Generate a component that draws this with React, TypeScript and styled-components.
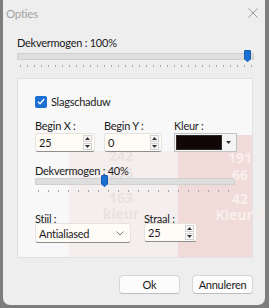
import React from 'react';
import styled, { createGlobalStyle } from 'styled-components';

const GlobalStyle = createGlobalStyle`
  html, body {
    margin: 0;
    padding: 0;
    background: #7d7d7d;
  }
  body {
    font-family: 'Lato', 'Noto Sans', sans-serif;
    font-size: 11px;
    letter-spacing: -0.25px;
    color: #1b1b1b;
  }
`;

const Screen = styled.div`
  width: 269px;
  height: 308px;
  padding-left: 3px;
  box-sizing: border-box;
  overflow: hidden;
  background: #7d7d7d;
`;

const Dialog = styled.div`
  width: 262px;
  height: 305px;
  background: #eeeeee;
  border-radius: 0 0 7px 7px;
  display: flex;
  flex-direction: column;
  overflow: hidden;
`;

const TitleBar = styled.div`
  height: 26px;
  display: flex;
  align-items: center;
  justify-content: space-between;
  padding: 0 7px 0 3px;
  color: #a3a3a3;
  font-size: 11.5px;
`;

const Body = styled.div`
  padding: 10px 12px 0 14px;
  display: flex;
  flex-direction: column;
`;

const Label = styled.div<{ $h?: number }>`
  line-height: 14px;
  height: ${(p) => p.$h ?? 14}px;
  white-space: nowrap;
`;

const SliderWrap = styled.div<{ $w: number }>`
  width: ${(p) => p.$w}px;
  display: flex;
  flex-direction: column;
`;

const TrackRow = styled.div`
  position: relative;
  height: 12px;
  display: flex;
  align-items: center;
`;

const Track = styled.div`
  flex: 1;
  height: 5px;
  background: #dedede;
  border: 1px solid #d0d0d0;
  border-radius: 1px;
`;

const Thumb = styled.div`
  position: absolute;
  top: 0;
  width: 7px;
  height: 12px;
  background: #1b6fd2;
  border: 1px solid #155bb0;
  box-sizing: border-box;
  border-radius: 1px 1px 3px 3px;
  clip-path: polygon(0 0, 100% 0, 100% 75%, 50% 100%, 0 75%);
`;

const Ticks = styled.div<{ $gap: number }>`
  height: 2px;
  margin-top: 3px;
  margin-left: 3px;
  background-image: repeating-linear-gradient(
    to right,
    #a7a7a7 0 1px,
    transparent 1px ${(p) => p.$gap}px
  );
`;

const Panel = styled.div`
  position: relative;
  margin-top: 11px;
  width: 236px;
  height: 180px;
  box-sizing: border-box;
  border: 1px solid #e1e1e1;
  background-color: #f8f8f8;
  background-image: linear-gradient(#f1dbd8, #f1dbd8),
    linear-gradient(#f4efee, #f4efee);
  background-repeat: no-repeat;
  background-size: 76px 124px, 112px 108px;
  background-position: 160px 56px, 51px 72px;
  padding: 16px 0 0 17px;
  display: flex;
  flex-direction: column;
`;

const Ghost = styled.div<{ $x: number; $y: number; $color: string }>`
  position: absolute;
  left: ${(p) => p.$x}px;
  top: ${(p) => p.$y}px;
  width: 60px;
  display: flex;
  flex-direction: column;
  align-items: center;
  font-family: 'Noto Sans', sans-serif;
  font-weight: 700;
  font-size: 14px;
  letter-spacing: 0;
  line-height: 17px;
  color: ${(p) => p.$color};
  z-index: 0;
`;

const GhostLine = styled.span<{ $mt?: number }>`
  margin-top: ${(p) => p.$mt ?? 0}px;
  white-space: nowrap;
`;

const Content = styled.div`
  position: relative;
  z-index: 1;
  display: flex;
  flex-direction: column;
`;

const CheckRow = styled.label`
  display: flex;
  align-items: center;
  gap: 4px;
  height: 13px;
`;

const Check = styled.span`
  width: 12px;
  height: 12px;
  border-radius: 2px;
  background: #1b6fd2;
  display: flex;
  align-items: center;
  justify-content: center;
`;

const FieldRow = styled.div<{ $mt: number }>`
  display: flex;
  margin-top: ${(p) => p.$mt}px;
`;

const Field = styled.div<{ $w: number }>`
  width: ${(p) => p.$w}px;
  display: flex;
  flex-direction: column;
`;

const Box = styled.div<{ $w: number; $mt?: number }>`
  width: ${(p) => p.$w}px;
  height: 19px;
  margin-top: ${(p) => p.$mt ?? 0}px;
  box-sizing: border-box;
  background: #fffcf7;
  border: 1px solid #e6e3df;
  border-bottom: 1px solid #8e8e8e;
  border-radius: 3px;
  display: flex;
  align-items: center;
  padding-left: 3px;
`;

const BoxText = styled.span`
  flex: 1;
`;

const Spinner = styled.div`
  width: 9px;
  margin-right: 2px;
  display: flex;
  flex-direction: column;
  gap: 1px;
`;

const SpinBtn = styled.div`
  height: 7px;
  background: #f7f7f7;
  border: 1px solid #d2d2d2;
  box-sizing: border-box;
  display: flex;
  align-items: center;
  justify-content: center;
`;

const ColorBox = styled.div`
  width: 63px;
  height: 19px;
  box-sizing: border-box;
  border: 1px solid #c2c2c2;
  background: #f4f4f4;
  display: flex;
  align-items: center;
  padding: 1px;
`;

const Swatch = styled.div`
  width: 46px;
  height: 15px;
  background: #120707;
  border: 1px solid #2a2a2a;
  box-sizing: border-box;
`;

const DropBtn = styled.div`
  flex: 1;
  display: flex;
  justify-content: center;
`;

const SelectBox = styled(Box)`
  height: 20px;
  padding-right: 6px;
`;

const Footer = styled.div`
  display: flex;
  justify-content: flex-end;
  gap: 12px;
  padding: 17px 12px 0 0;
`;

const Button = styled.button`
  width: 61px;
  height: 19px;
  box-sizing: border-box;
  background: #fcfcfc;
  border: 1px solid #d6d6d6;
  border-bottom-color: #bdbdbd;
  border-radius: 4px;
  font-family: inherit;
  font-size: 11px;
  letter-spacing: -0.25px;
  color: #1b1b1b;
  padding: 0;
`;

const Arrow = ({ up }: { up?: boolean }) => (
  <svg width="5" height="3" viewBox="0 0 5 3">
    <path d={up ? 'M0 3 L2.5 0 L5 3 Z' : 'M0 0 L5 0 L2.5 3 Z'} fill="#333" />
  </svg>
);

const NumberInput = ({ value, w, mt }: { value: string; w: number; mt?: number }) => (
  <Box $w={w} $mt={mt}>
    <BoxText>{value}</BoxText>
    <Spinner>
      <SpinBtn><Arrow up /></SpinBtn>
      <SpinBtn><Arrow /></SpinBtn>
    </Spinner>
  </Box>
);

const Slider = ({ w, frac, gap }: { w: number; frac: number; gap: number }) => (
  <SliderWrap $w={w}>
    <TrackRow>
      <Track />
      <Thumb style={{ left: Math.round(frac * (w - 7)) }} />
    </TrackRow>
    <Ticks $gap={gap} />
  </SliderWrap>
);

export default function App() {
  return (
    <>
      <GlobalStyle />
      <Screen>
        <Dialog>
          <TitleBar>
            <span>Opties</span>
            <svg width="10" height="10" viewBox="0 0 10 10">
              <path d="M0.5 0.5 L9.5 9.5 M9.5 0.5 L0.5 9.5" stroke="#9a9a9a" strokeWidth="1" />
            </svg>
          </TitleBar>
          <Body>
            <Label>Dekvermogen : 100%</Label>
            <Slider w={237} frac={0.985} gap={7} />
            <Panel>
              <Ghost $x={73} $y={68} $color="#e8e2e0">
                <GhostLine>242</GhostLine>
                <GhostLine>206</GhostLine>
                <GhostLine $mt={8}>163</GhostLine>
                <GhostLine $mt={-1}>kleur</GhostLine>
              </Ghost>
              <Ghost $x={192} $y={70} $color="#f8eeec">
                <GhostLine>191</GhostLine>
                <GhostLine>66</GhostLine>
                <GhostLine $mt={7}>42</GhostLine>
                <GhostLine $mt={-1}>Kleur 2</GhostLine>
              </Ghost>
              <Content>
                <CheckRow>
                  <Check>
                    <svg width="8" height="7" viewBox="0 0 8 7">
                      <path d="M0.8 3.6 L3 5.8 L7.2 1" stroke="#fff" strokeWidth="1.3" fill="none" />
                    </svg>
                  </Check>
                  Slagschaduw
                </CheckRow>
                <FieldRow $mt={11}>
                  <Field $w={69}>
                    <Label>Begin X :</Label>
                    <NumberInput value="25" w={60} />
                  </Field>
                  <Field $w={70}>
                    <Label>Begin Y :</Label>
                    <NumberInput value="0" w={58} />
                  </Field>
                  <Field $w={63}>
                    <Label>Kleur :</Label>
                    <ColorBox>
                      <Swatch />
                      <DropBtn><Arrow /></DropBtn>
                    </ColorBox>
                  </Field>
                </FieldRow>
                <FieldRow $mt={12}>
                  <Field $w={200}>
                    <Label $h={11}>Dekvermogen : 40%</Label>
                    <Slider w={200} frac={0.34} gap={10} />
                  </Field>
                </FieldRow>
                <FieldRow $mt={20}>
                  <Field $w={109}>
                    <Label>Stijl :</Label>
                    <SelectBox $w={96} $mt={-3}>
                      <BoxText>Antialiased</BoxText>
                      <svg width="8" height="5" viewBox="0 0 8 5">
                        <path d="M0.5 0.5 L4 4 L7.5 0.5" stroke="#777" fill="none" />
                      </svg>
                    </SelectBox>
                  </Field>
                  <Field $w={60}>
                    <Label>Straal :</Label>
                    <NumberInput value="25" w={53} mt={-3} />
                  </Field>
                </FieldRow>
              </Content>
            </Panel>
          </Body>
          <Footer>
            <Button>Ok</Button>
            <Button>Annuleren</Button>
          </Footer>
        </Dialog>
      </Screen>
    </>
  );
}
